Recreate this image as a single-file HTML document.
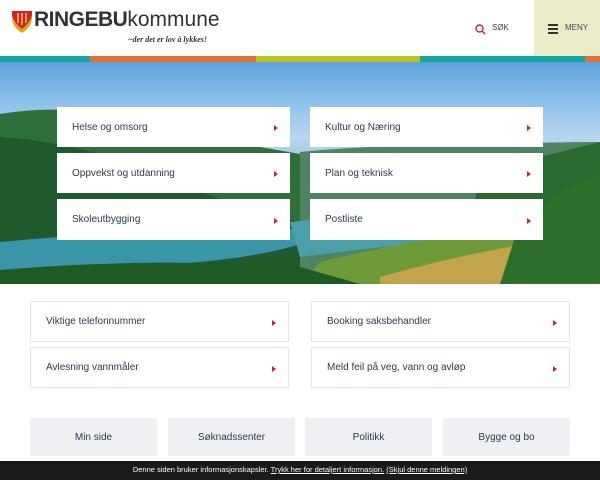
<!DOCTYPE html>
<html><head><meta charset="utf-8"><style>
*{margin:0;padding:0;box-sizing:border-box}
body{width:600px;height:480px;overflow:hidden;font-family:"Liberation Sans",sans-serif;background:#fff;position:relative}
.abs{position:absolute}
.box{position:absolute;background:#fff;font-size:10px;color:#2a3a4f;padding-left:15px;display:flex;align-items:center}
.box:after{content:"";position:absolute;right:12px;top:50%;margin-top:-2px;border-left:4px solid #c8262e;border-top:3px solid transparent;border-bottom:3px solid transparent}
.lb{border:1px solid #e2e4ea}
.btn{position:absolute;top:418px;height:38px;background:#eff0f4;color:#2a3a4f;font-size:10px;display:flex;align-items:center;justify-content:center}
</style></head><body>
<svg class="abs" style="left:12px;top:11px" width="20" height="22" viewBox="0 0 20 22"><path d="M0 0H20V6Q20 16 10 22Q0 16 0 6Z" fill="#e8a21a"/><path d="M0 0H20V4Q18 12 10 18Q2 12 0 4Z" fill="#d2232a"/><path d="M6 2V12M10 2V14M14 2V12" stroke="#f7c948" stroke-width="1.5"/></svg>
<div class="abs" style="left:34px;top:8px;font-size:21px;font-weight:bold;color:#333;letter-spacing:-0.5px">RINGEBU<span style="font-weight:normal;letter-spacing:0">kommune</span></div>
<div class="abs" style="left:128px;top:35px;font-size:8px;font-style:italic;font-family:'Liberation Serif',serif;font-weight:bold;color:#333">~der det er lov å lykkes!</div>
<svg class="abs" style="left:475px;top:24px" width="11" height="11" viewBox="0 0 11 11"><circle cx="4.5" cy="4.5" r="3.5" fill="none" stroke="#c8262e" stroke-width="1.4"/><path d="M7 7L10 10" stroke="#c8262e" stroke-width="1.5"/></svg>
<div class="abs" style="left:492px;top:23px;font-size:8px;color:#3a4a5f">SØK</div>
<div class="abs" style="left:534px;top:0;width:66px;height:56px;background:#eaecc8"></div>
<div class="abs" style="left:548px;top:24px;width:10px;height:2px;background:#333"></div>
<div class="abs" style="left:548px;top:28px;width:10px;height:2px;background:#333"></div>
<div class="abs" style="left:548px;top:32px;width:10px;height:2px;background:#333"></div>
<div class="abs" style="left:565px;top:23px;font-size:8px;color:#3a4a5f">MENY</div>
<div class="abs" style="left:0;top:56px;width:600px;height:6px;background:linear-gradient(90deg,#14a5a0 0 90px,#e26f3a 90px 256px,#b7c41a 256px 420px,#14a5a0 420px 585px,#e26f3a 585px)"></div>
<div class="abs" style="left:0;top:62px;width:600px;height:222px;overflow:hidden;background:linear-gradient(#5ea3de 0,#8cc0ea 40px,#b8d6f0 75px,#a8c8e6 95px)">
<svg width="600" height="222" viewBox="0 0 600 222" style="position:absolute;left:0;top:0">
<path d="M0 52Q60 42 120 55Q200 75 260 85L300 92L300 222H0Z" fill="#2f6f3c"/>
<path d="M300 90Q380 82 450 85Q520 80 600 80V222H300Z" fill="#4f8462"/>
<path d="M0 75Q80 80 150 110Q210 135 260 150L300 160V222H0Z" fill="#1f5a2c"/>
<path d="M480 110Q560 90 600 80V222H460Z" fill="#2a6a30"/>
<path d="M0 180Q100 170 200 172Q280 165 330 168Q300 190 200 200Q100 210 0 212Z" fill="#3a95a8"/>
<path d="M290 160Q380 150 470 148L470 175Q380 185 300 195Z" fill="#4aa0a8"/>
<path d="M320 200Q420 175 520 165L600 160V222H300Z" fill="#6e9a38"/>
<path d="M380 215Q470 190 540 180L520 222H380Z" fill="#c2a54a"/>
<path d="M0 208Q150 195 300 205L360 222H0Z" fill="#1e5a24"/>
<path d="M520 160Q570 120 600 110V222H500Z" fill="#2c6e2a"/>
</svg></div>
<div class="box" style="left:57px;top:107px;width:233px;height:40px">Helse og omsorg</div>
<div class="box" style="left:57px;top:153px;width:233px;height:40px">Oppvekst og utdanning</div>
<div class="box" style="left:57px;top:199px;width:233px;height:41px">Skoleutbygging</div>
<div class="box" style="left:310px;top:107px;width:233px;height:40px">Kultur og Næring</div>
<div class="box" style="left:310px;top:153px;width:233px;height:40px">Plan og teknisk</div>
<div class="box" style="left:310px;top:199px;width:233px;height:41px">Postliste</div>
<div class="box lb" style="left:30px;top:301px;width:259px;height:41px">Viktige telefonnummer</div>
<div class="box lb" style="left:30px;top:347px;width:259px;height:41px">Avlesning vannmåler</div>
<div class="box lb" style="left:311px;top:301px;width:259px;height:41px">Booking saksbehandler</div>
<div class="box lb" style="left:311px;top:347px;width:259px;height:41px">Meld feil på veg, vann og avløp</div>
<div class="btn" style="left:30px;width:127px">Min side</div>
<div class="btn" style="left:168px;width:127px">Søknadssenter</div>
<div class="btn" style="left:305px;width:127px">Politikk</div>
<div class="btn" style="left:443px;width:127px">Bygge og bo</div>
<div class="abs" style="left:0;top:461px;width:600px;height:19px;background:#1a1a1a;color:#fff;font-size:7.5px;text-align:center;line-height:18px">Denne siden bruker informasjonskapsler. <u>Trykk her for detaljert informasjon.</u> <u>(Skjul denne meldingen)</u></div>
</body></html>
